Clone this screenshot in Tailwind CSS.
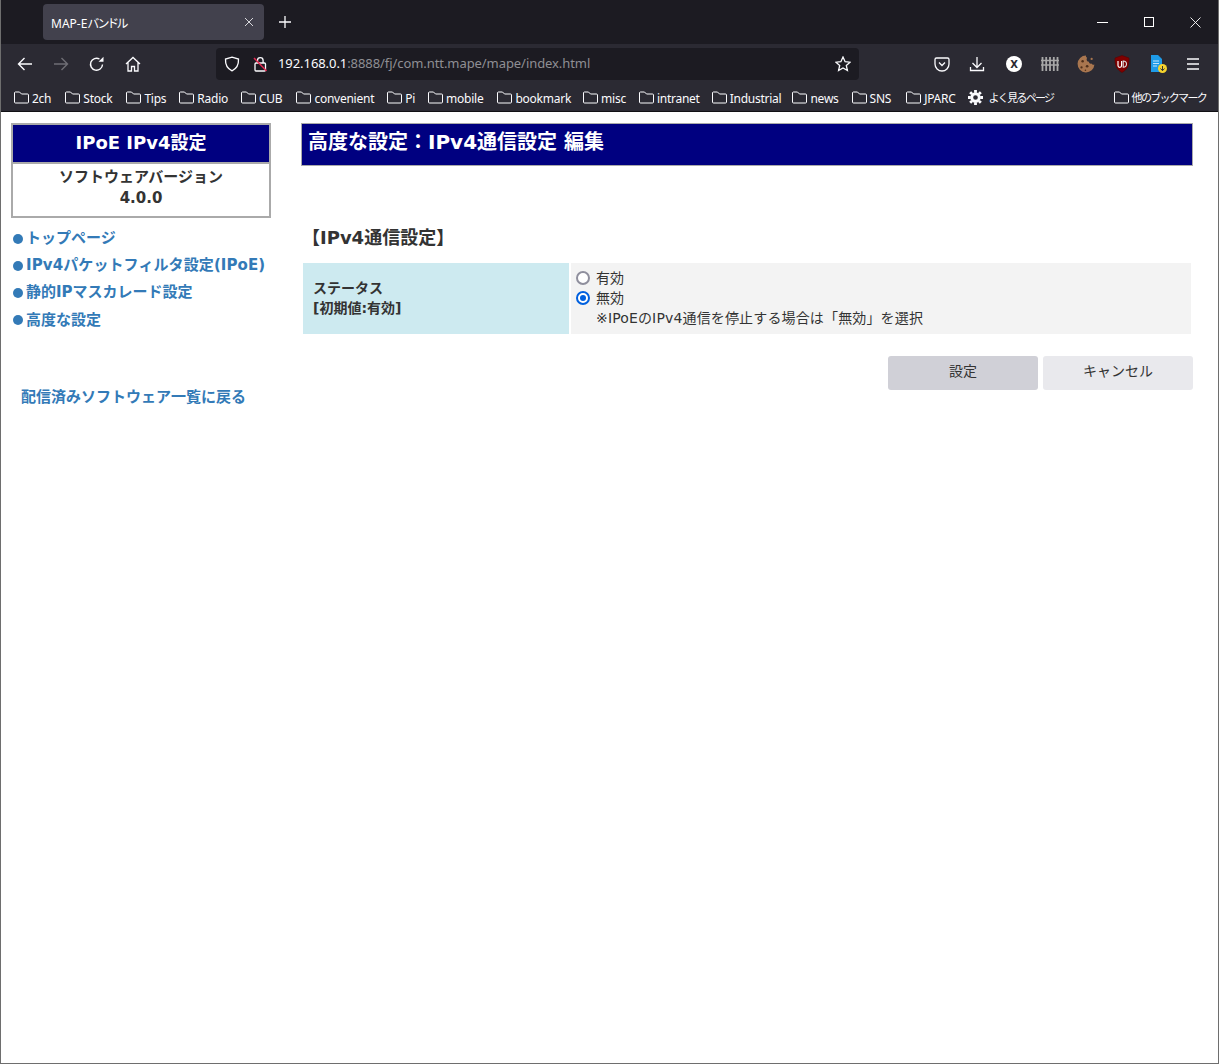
<!DOCTYPE html>
<html lang="ja">
<head>
  <meta charset="UTF-8" />
  <title>MAP-Eバンドル</title>
  <script src="https://cdn.jsdelivr.net/npm/@tailwindcss/browser@4"></script>
</head>
<body class="h-[1064px] overflow-hidden bg-white border border-[#6e6e6e] border-t-0 font-['DejaVu_Sans','Noto_Sans_CJK_JP',sans-serif] text-[#333]">
  <!-- tab strip -->
  <div class="h-[44px] bg-[#1c1b22] flex items-center pl-[42px] text-white font-['Noto_Sans','Noto_Sans_CJK_JP',sans-serif]">
    <div class="w-[221px] h-[36px] bg-[#42414d] rounded-[4px] flex items-center justify-between pl-[8px] pr-[10px] text-[12px]">
      <span class="pt-[3px]">MAP-E<span class="tracking-[-2.5px]">バンドル</span></span>
      <svg class="w-[10px] h-[10px]" viewBox="0 0 10 10" fill="none" stroke="#d8d8dc" stroke-width="1"><path d="M1 1l8 8M9 1l-8 8"/></svg>
    </div>
    <svg class="ml-[15px] w-[12px] h-[12px]" viewBox="0 0 12 12" fill="none" stroke="#fbfbfe" stroke-width="1.3"><path d="M6 0v12M0 6h12"/></svg>
    <div class="ml-auto flex items-center gap-[36px] pr-[17px]">
      <svg class="w-[11px] h-[11px]" viewBox="0 0 11 11" fill="none" stroke="#fff" stroke-width="1"><path d="M0 5.5h11"/></svg>
      <svg class="w-[10px] h-[10px]" viewBox="0 0 10 10" fill="none" stroke="#fff" stroke-width="1"><rect x=".5" y=".5" width="9" height="9"/></svg>
      <svg class="w-[11px] h-[11px]" viewBox="0 0 11 11" fill="none" stroke="#fff" stroke-width=".9"><path d="M.5.5l10 10M10.5.5l-10 10"/></svg>
    </div>
  </div>
  <!-- nav bar -->
  <div class="h-[40px] bg-[#2b2a33] flex items-center text-[#fbfbfe]">
    <div class="flex items-center pl-[16px] gap-[20px]">
      <svg class="w-[16px] h-[16px]" viewBox="0 0 16 16" fill="none" stroke="#fbfbfe" stroke-width="1.4"><path d="M15 8H1.5M7.5 2L1.5 8l6 6"/></svg>
      <svg class="w-[16px] h-[16px]" viewBox="0 0 16 16" fill="none" stroke="#6f6e75" stroke-width="1.4"><path d="M1 8h13.5M8.500 2l6 6-6 6"/></svg>
      <svg class="w-[16px] h-[16px]" viewBox="0 0 16 16" fill="none" stroke="#fbfbfe" stroke-width="1.4"><path d="M13.500 8.500A6 6 0 1 1 10.500 3"/><path d="M14.500 .8v5h-5z" fill="#fbfbfe" stroke="none"/></svg>
      <svg class="w-[16px] h-[16px]" viewBox="0 0 16 16" fill="none" stroke="#fbfbfe" stroke-width="1.3"><path d="M1 8l7-6.500L15 8M3 6.500V15h3.500v-4.500h3V15H13V6.500"/></svg>
    </div>
    <div class="ml-[75px] w-[643px] h-[32px] bg-[#1c1b22] rounded-[4px] flex items-center pl-[8px] pr-[8px] text-[13px] font-['Noto_Sans',sans-serif]">
      <svg class="w-[16px] h-[16px]" viewBox="0 0 16 16" fill="none" stroke="#fbfbfe" stroke-width="1.3"><path d="M8 1.200L14.500 3c.3 6-1.500 9.500-6.500 11.800C3 12.500 1.200 9 1.500 3z"/></svg>
      <svg class="ml-[13px] w-[15px] h-[16px]" viewBox="0 0 15 16" fill="none" stroke="#fbfbfe" stroke-width="1.3"><rect x="2" y="7" width="10.500" height="8" rx="1"/><path d="M4.500 7V4.500a2.800 2.800 0 0 1 5.600 0V7"/><path d="M1 2l12.500 13" stroke="#e22850" stroke-width="1.500"/></svg>
      <span class="ml-[10px] whitespace-nowrap tracking-[-0.07px]">192.168.0.1<span class="text-[#8f8f94]">:8888/fj/com.ntt.mape/mape/index.html</span></span>
      <svg class="ml-auto w-[16px] h-[16px]" viewBox="0 0 16 16" fill="none" stroke="#fbfbfe" stroke-width="1.300"><path d="M8 1l2.100 4.700 5 .5-3.800 3.300 1.100 5L8 11.900l-4.400 2.600 1.100-5L.9 6.200l5-.5z"/></svg>
    </div>
    <div class="ml-[75px] flex items-center gap-[20px]">
      <svg class="w-[16px] h-[16px]" viewBox="0 0 16 16" fill="none" stroke="#fbfbfe" stroke-width="1.300"><path d="M2.500 2h11A1.500 1.500 0 0 1 15 3.500V8A7 7 0 0 1 1 8V3.500A1.500 1.500 0 0 1 2.500 2z"/><path d="M5 6.500l3 3 3-3"/></svg>
      <svg class="w-[16px] h-[16px] -ml-px mr-px" viewBox="0 0 16 16" fill="none" stroke="#fbfbfe" stroke-width="1.300"><path d="M8 1v10M3.500 7L8 11.500 12.500 7M1.500 11v3.500h13V11"/></svg>
      <div class="w-[16px] h-[16px] rounded-full bg-white flex items-center justify-center text-[10px] font-bold text-[#2b2a33]">X</div>
      <svg class="w-[18px] h-[16px] -mx-px" viewBox="0 0 18 16" fill="none" stroke="#a8a8a8" stroke-width="1.800"><path d="M1.500 1v14M5.200 1v14M9 1v14M12.800 1v14M16.500 1v14"/><path d="M0 4.500h18M0 9h18" stroke-width="1.400"/></svg>
      <svg class="w-[18px] h-[18px] -mx-px" viewBox="0 0 16 16"><path d="M8 .5a7.500 7.500 0 1 0 7.500 8c-1.200.5-2-.2-2.500-1-1 .5-2.200 0-2.500-1.500C9 6 8 4.500 9 2.500 8 2 7.800 1.200 8 .5z" fill="#a9764f"/><circle cx="5" cy="5.500" r="1.100" fill="#4f2f1a"/><circle cx="4" cy="11" r="1" fill="#4f2f1a"/><circle cx="9" cy="10" r="1.200" fill="#4f2f1a"/><circle cx="7.500" cy="13.500" r=".7" fill="#4f2f1a"/><circle cx="13" cy="3.500" r="1" fill="#a9764f"/></svg>
      <div class="relative w-[16px] h-[18px]">
        <svg class="w-[16px] h-[18px]" viewBox="0 0 16 18"><path d="M8 .5L15 3c.3 7-1.500 11.500-7 14.500C2.500 14.500.7 10 1 3z" fill="#800000" stroke="#5a0000" stroke-width=".6"/><path d="M4 6v4.500a1.800 1.800 0 0 0 3.600 0V6" fill="none" stroke="#fff" stroke-width="1.200"/><path d="M9.200 6v6.200c2.500 0 3.300-1.400 3.300-3.100S11.700 6 9.200 6z" fill="none" stroke="#ddd" stroke-width="1.100"/></svg>
      </div>
      <svg class="w-[18px] h-[20px] -mr-[1px]" viewBox="0 0 18 20"><path d="M1 1h7l4 4v13H1z" fill="#1e9be8"/><path d="M3 7h6M3 9.500h6M3 12h4" stroke="#bfe4fb" stroke-width="1"/><circle cx="12.500" cy="14.500" r="4.500" fill="#f6d32d"/><path d="M12.500 12v4.500M10.500 14.500l2 2.200 2-2.200" fill="none" stroke="#333" stroke-width="1"/></svg>
      <svg class="w-[16px] h-[16px] -ml-[2px]" viewBox="0 0 16 16" fill="none" stroke="#fbfbfe" stroke-width="1.300"><path d="M2 3h12M2 8h12M2 13h12"/></svg>
    </div>
  </div>
  <!-- bookmarks -->
  <div class="h-[28px] bg-[#2b2a33] border-b border-black/60 flex items-center pl-[13px] pr-[12px] gap-[13px] text-[12px] tracking-[-0.25px] text-[#fbfbfe] whitespace-nowrap font-['Noto_Sans','Noto_Sans_CJK_JP',sans-serif]">
    <div class="flex items-center gap-[3px]"><svg class="w-[15px] h-[13px]" viewBox="0 0 15 13" fill="none" stroke="#fbfbfe"><path d="M1.500 1h4l2 2h6a1 1 0 0 1 1 1v7a1 1 0 0 1-1 1h-12a1 1 0 0 1-1-1V1.500z"/></svg><span class="pt-[2px]">2ch</span></div>
    <div class="ml-px flex items-center gap-[3px]"><svg class="w-[15px] h-[13px]" viewBox="0 0 15 13" fill="none" stroke="#fbfbfe"><path d="M1.500 1h4l2 2h6a1 1 0 0 1 1 1v7a1 1 0 0 1-1 1h-12a1 1 0 0 1-1-1V1.500z"/></svg><span class="pt-[2px]">Stock</span></div>
    <div class="ml-px flex items-center gap-[3px]"><svg class="w-[15px] h-[13px]" viewBox="0 0 15 13" fill="none" stroke="#fbfbfe"><path d="M1.500 1h4l2 2h6a1 1 0 0 1 1 1v7a1 1 0 0 1-1 1h-12a1 1 0 0 1-1-1V1.500z"/></svg><span class="pt-[2px]">Tips</span></div>
    <div class="flex items-center gap-[3px]"><svg class="w-[15px] h-[13px]" viewBox="0 0 15 13" fill="none" stroke="#fbfbfe"><path d="M1.500 1h4l2 2h6a1 1 0 0 1 1 1v7a1 1 0 0 1-1 1h-12a1 1 0 0 1-1-1V1.500z"/></svg><span class="pt-[2px]">Radio</span></div>
    <div class="flex items-center gap-[3px]"><svg class="w-[15px] h-[13px]" viewBox="0 0 15 13" fill="none" stroke="#fbfbfe"><path d="M1.500 1h4l2 2h6a1 1 0 0 1 1 1v7a1 1 0 0 1-1 1h-12a1 1 0 0 1-1-1V1.500z"/></svg><span class="pt-[2px]">CUB</span></div>
    <div class="ml-px flex items-center gap-[3px]"><svg class="w-[15px] h-[13px]" viewBox="0 0 15 13" fill="none" stroke="#fbfbfe"><path d="M1.500 1h4l2 2h6a1 1 0 0 1 1 1v7a1 1 0 0 1-1 1h-12a1 1 0 0 1-1-1V1.500z"/></svg><span class="pt-[2px]">convenient</span></div>
    <div class="flex items-center gap-[3px]"><svg class="w-[15px] h-[13px]" viewBox="0 0 15 13" fill="none" stroke="#fbfbfe"><path d="M1.500 1h4l2 2h6a1 1 0 0 1 1 1v7a1 1 0 0 1-1 1h-12a1 1 0 0 1-1-1V1.500z"/></svg><span class="pt-[2px]">Pi</span></div>
    <div class="flex items-center gap-[3px]"><svg class="w-[15px] h-[13px]" viewBox="0 0 15 13" fill="none" stroke="#fbfbfe"><path d="M1.500 1h4l2 2h6a1 1 0 0 1 1 1v7a1 1 0 0 1-1 1h-12a1 1 0 0 1-1-1V1.500z"/></svg><span class="pt-[2px]">mobile</span></div>
    <div class="ml-px flex items-center gap-[3px]"><svg class="w-[15px] h-[13px]" viewBox="0 0 15 13" fill="none" stroke="#fbfbfe"><path d="M1.500 1h4l2 2h6a1 1 0 0 1 1 1v7a1 1 0 0 1-1 1h-12a1 1 0 0 1-1-1V1.500z"/></svg><span class="pt-[2px]">bookmark</span></div>
    <div class="-ml-px flex items-center gap-[3px]"><svg class="w-[15px] h-[13px]" viewBox="0 0 15 13" fill="none" stroke="#fbfbfe"><path d="M1.500 1h4l2 2h6a1 1 0 0 1 1 1v7a1 1 0 0 1-1 1h-12a1 1 0 0 1-1-1V1.500z"/></svg><span class="pt-[2px]">misc</span></div>
    <div class="flex items-center gap-[3px]"><svg class="w-[15px] h-[13px]" viewBox="0 0 15 13" fill="none" stroke="#fbfbfe"><path d="M1.500 1h4l2 2h6a1 1 0 0 1 1 1v7a1 1 0 0 1-1 1h-12a1 1 0 0 1-1-1V1.500z"/></svg><span class="pt-[2px]">intranet</span></div>
    <div class="-ml-px flex items-center gap-[3px]"><svg class="w-[15px] h-[13px]" viewBox="0 0 15 13" fill="none" stroke="#fbfbfe"><path d="M1.500 1h4l2 2h6a1 1 0 0 1 1 1v7a1 1 0 0 1-1 1h-12a1 1 0 0 1-1-1V1.500z"/></svg><span class="pt-[2px]">Industrial</span></div>
    <div class="-ml-[2px] flex items-center gap-[3px]"><svg class="w-[15px] h-[13px]" viewBox="0 0 15 13" fill="none" stroke="#fbfbfe"><path d="M1.500 1h4l2 2h6a1 1 0 0 1 1 1v7a1 1 0 0 1-1 1h-12a1 1 0 0 1-1-1V1.500z"/></svg><span class="pt-[2px]">news</span></div>
    <div class="flex items-center gap-[3px]"><svg class="w-[15px] h-[13px]" viewBox="0 0 15 13" fill="none" stroke="#fbfbfe"><path d="M1.500 1h4l2 2h6a1 1 0 0 1 1 1v7a1 1 0 0 1-1 1h-12a1 1 0 0 1-1-1V1.500z"/></svg><span class="pt-[2px]">SNS</span></div>
    <div class="ml-[2px] flex items-center gap-[3px]"><svg class="w-[15px] h-[13px]" viewBox="0 0 15 13" fill="none" stroke="#fbfbfe"><path d="M1.500 1h4l2 2h6a1 1 0 0 1 1 1v7a1 1 0 0 1-1 1h-12a1 1 0 0 1-1-1V1.500z"/></svg><span class="pt-[2px]">JPARC</span></div>
    <div class="-ml-px flex items-center gap-[6px]"><svg class="w-[15px] h-[15px]" viewBox="0 0 16 16" fill="none" stroke="#fbfbfe"><circle cx="8" cy="8" r="4" stroke-width="3"/><path stroke-width="3" d="M8 0v3M8 13v3M0 8h3M13 8h3M2.300 2.300l2.100 2.100M11.600 11.600l2.100 2.100M13.700 2.300l-2.100 2.100M4.400 11.600l-2.100 2.100"/></svg><span class="pt-[2px] text-[11px] tracking-[-1.7px]">よく見るページ</span></div>
    <div class="ml-auto flex items-center gap-[3px]"><svg class="w-[15px] h-[13px]" viewBox="0 0 15 13" fill="none" stroke="#fbfbfe"><path d="M1.500 1h4l2 2h6a1 1 0 0 1 1 1v7a1 1 0 0 1-1 1h-12a1 1 0 0 1-1-1V1.500z"/></svg><span class="pt-[2px] text-[11px] tracking-[-1.7px]">他のブックマーク</span></div>
  </div>
  <!-- page -->
  <div class="flex pt-[11px] pl-[10px]">
    <aside class="w-[261px] shrink-0">
      <div class="w-[260px] border-2 border-[#aaa]">
        <div class="h-[37px] bg-[#000080] text-white text-[18px] font-bold flex items-center justify-center pb-[2px]">IPoE IPv4設定</div>
        <div class="border-t-2 border-[#aaa] h-[54px] text-[15px] font-bold text-center leading-[21px] pt-[3px]">ソフトウェアバージョン<br>4.0.0</div>
      </div>
      <ul class="mt-[7px] text-[15px] font-bold text-[#337ab7] leading-[27.200px] pl-[2px] whitespace-nowrap">
        <li class="flex items-center"><span class="w-[10px] h-[10px] rounded-full bg-[#337ab7] mr-[3px]"></span>トップページ</li>
        <li class="flex items-center tracking-[0.1px]"><span class="w-[10px] h-[10px] rounded-full bg-[#337ab7] mr-[3px]"></span>IPv4パケットフィルタ設定(IPoE)</li>
        <li class="flex items-center"><span class="w-[10px] h-[10px] rounded-full bg-[#337ab7] mr-[3px]"></span>静的IPマスカレード設定</li>
        <li class="flex items-center"><span class="w-[10px] h-[10px] rounded-full bg-[#337ab7] mr-[3px]"></span>高度な設定</li>
      </ul>
      <a class="block mt-[50px] pl-[10px] text-[15px] font-bold text-[#337ab7] leading-[27px]">配信済みソフトウェア一覧に戻る</a>
    </aside>
    <main class="ml-[29px] w-[892px]">
      <div class="h-[43px] bg-[#000080] border border-[#aaa] text-white text-[20px] font-bold flex items-center pl-[6px] pb-[6px]">高度な設定：IPv4通信設定 編集</div>
      <h2 class="mt-[59px] pl-[1px] text-[18px] font-bold leading-[26px]">【IPv4通信設定】</h2>
      <div class="mt-[12px] ml-[2px] w-[888px] h-[71px] flex text-[14px]">
        <div class="w-[266px] bg-[#cdeaf0] font-bold pl-[10px] flex flex-col justify-center leading-[20px] pb-[2px]"><span>ステータス</span><span>[初期値:有効]</span></div>
        <div class="ml-[2px] flex-1 bg-[#f3f3f3] pl-[5px] pt-[5px] leading-[20px]">
          <div class="flex items-center"><span class="w-[14px] h-[14px] rounded-full border-2 border-[#8f8f9d] bg-white mr-[6px]"></span>有効</div>
          <div class="flex items-center"><span class="w-[14px] h-[14px] rounded-full border-2 border-[#0060df] bg-white mr-[6px] flex items-center justify-center"><span class="w-[6px] h-[6px] rounded-full bg-[#0060df]"></span></span>無効</div>
          <div class="pl-[20px] tracking-[0.15px]">※IPoEのIPv4通信を停止する場合は「無効」を選択</div>
        </div>
      </div>
      <div class="mt-[22px] flex justify-end gap-[5px] text-[14px]">
        <button class="w-[150px] h-[34px] rounded-[3px] bg-[#d0d0d7] pb-[4px]">設定</button>
        <button class="w-[150px] h-[34px] rounded-[3px] bg-[#e9e9ed] pb-[4px]">キャンセル</button>
      </div>
    </main>
  </div>
</body>
</html>
